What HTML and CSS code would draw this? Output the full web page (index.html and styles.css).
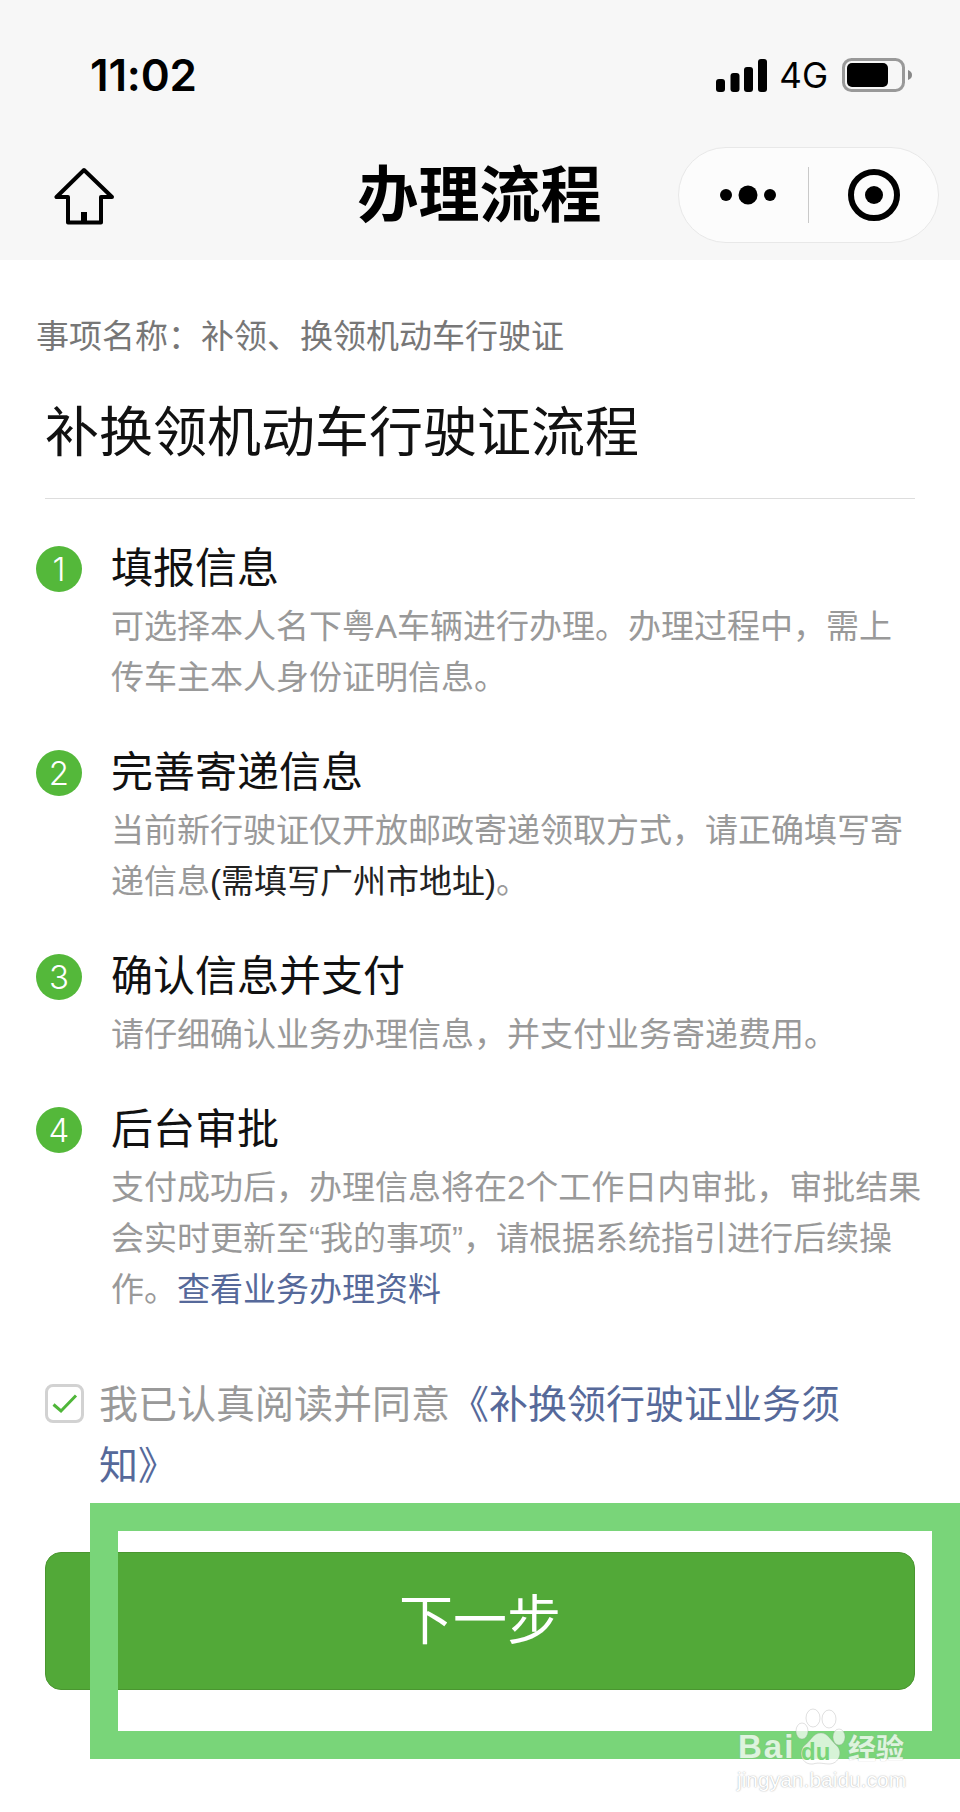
FILE: index.html
```html
<!DOCTYPE html>
<html lang="zh-CN">
<head>
<meta charset="utf-8">
<title>办理流程</title>
<link rel="stylesheet" href="styles.css">
</head>
<body>
<div class="page">
  <header class="top">
    <div class="status">
      <span class="time">11:02</span>
      <div class="status-right">
        <svg class="signal" width="51" height="33" viewBox="0 0 51 33"><rect x="0" y="20" width="9" height="13" rx="3"/><rect x="14.500" y="14" width="9" height="19" rx="3"/><rect x="28" y="8" width="9" height="25" rx="3"/><rect x="42" y="0" width="9" height="33" rx="3"/></svg>
        <span class="net">4G</span>
        <svg class="battery" width="70" height="34" viewBox="0 0 70 34"><rect x="1.500" y="1.500" width="60" height="31" rx="8" fill="none" stroke="#999" stroke-width="3"/><rect x="5" y="5" width="41" height="24" rx="5" fill="#000"/><path d="M66 12c3 1 4 3 4 5s-1 4-4 5z" fill="#888"/></svg>
      </div>
    </div>
    <nav class="navbar">
      <svg class="home" width="62" height="60" viewBox="0 0 62 60"><path d="M30 3 2.500 30H14v25.500h33V30h11z" fill="none" stroke="#000" stroke-width="4" stroke-linejoin="round"/><rect x="27" y="45" width="6" height="10" fill="#000"/></svg>
      <h1 class="nav-title">办理流程</h1>
      <div class="capsule">
        <svg width="62" height="20" viewBox="0 0 62 20"><circle cx="6" cy="10" r="6"/><circle cx="28" cy="10" r="9.500"/><circle cx="50" cy="10" r="6"/></svg>
        <span class="capsule-line"></span>
        <svg width="52" height="52" viewBox="0 0 52 52"><circle cx="26" cy="26" r="23" fill="none" stroke="#000" stroke-width="6"/><circle cx="26" cy="26" r="9"/></svg>
      </div>
    </nav>
  </header>

  <main class="content">
    <p class="item-name">事项名称：补领、换领机动车行驶证</p>
    <h2 class="flow-title">补换领机动车行驶证流程</h2>
    <div class="rule"></div>

    <ol class="steps">
      <li class="step">
        <span class="num">1</span>
        <div class="step-body">
          <h3 class="step-title">填报信息</h3>
          <p class="step-desc">可选择本人名下粤A车辆进行办理。办理过程中，需上<br>传车主本人身份证明信息。</p>
        </div>
      </li>
      <li class="step">
        <span class="num">2</span>
        <div class="step-body">
          <h3 class="step-title">完善寄递信息</h3>
          <p class="step-desc">当前新行驶证仅开放邮政寄递领取方式，请正确填写寄<br>递信息<span class="dark">(需填写广州市地址)</span>。</p>
        </div>
      </li>
      <li class="step">
        <span class="num">3</span>
        <div class="step-body">
          <h3 class="step-title">确认信息并支付</h3>
          <p class="step-desc">请仔细确认业务办理信息，并支付业务寄递费用。</p>
        </div>
      </li>
      <li class="step">
        <span class="num">4</span>
        <div class="step-body">
          <h3 class="step-title">后台审批</h3>
          <p class="step-desc">支付成功后，办理信息将在2个工作日内审批，审批结果<br>会实时更新至“我的事项”，请根据系统指引进行后续操<br>作。<a class="link">查看业务办理资料</a></p>
        </div>
      </li>
    </ol>

    <div class="agree">
      <span class="checkbox"><svg width="26" height="20" viewBox="0 0 26 20"><path d="M1.500 10.500 9 17 24 1.500" fill="none" stroke="#4fb639" stroke-width="3"/></svg></span>
      <p class="agree-text">我已认真阅读并同意<a class="link">《补换领行驶证业务须<br>知》</a></p>
    </div>

    <button class="next" type="button">下一步</button>
  </main>

  <div class="highlight"></div>

  <div class="watermark">
    <svg class="paw" width="54" height="60" viewBox="0 0 54 60"><g fill="#fff" fill-opacity=".7" stroke="#999" stroke-opacity=".3" stroke-width="1"><ellipse cx="18" cy="10" rx="7" ry="9"/><ellipse cx="34" cy="11" rx="7" ry="9"/><ellipse cx="7" cy="23" rx="6" ry="8"/><ellipse cx="44" cy="29" rx="6" ry="8"/><path d="M26 25c7 0 10 8 16 13 6 6 2 18-8 18-5 0-10-2-16 0-11 1-15-11-9-18 7-5 9-13 17-13z"/></g></svg>
    <span class="wm-bai">Bai</span>
    <span class="wm-du">du</span>
    <span class="wm-jy">经验</span>
    <span class="wm-url">jingyan.baidu.com</span>
  </div>
</div>
</body>
</html>
```
FILE: styles.css
```css
* { box-sizing: border-box; }
html, body { margin: 0; padding: 0; background: #fff; }
body { font-family: "Liberation Sans", "Noto Sans CJK SC", sans-serif; color: #111; }
h1, h2, h3, p, ol { margin: 0; padding: 0; font-weight: 400; }
ol { list-style: none; }

.page { position: relative; width: 960px; height: 1812px; overflow: hidden; background: #fff; }

.top { height: 260px; background: #f7f7f7; }
.status { display: flex; justify-content: space-between; align-items: center; height: 147px; padding: 3px 48px 0 90px; }
.time { font-family: Inter, "Liberation Sans", sans-serif; font-size: 44px; font-weight: 600; color: #000; letter-spacing: -0.2px; }
.status-right { display: flex; align-items: center; }
.signal { display: block; margin-right: 12px; }
.net { font-family: Inter, "Liberation Sans", sans-serif; font-size: 35px; color: #000; margin-right: 14px; }
.battery { display: block; }

.navbar { display: grid; grid-template-columns: 1fr auto 1fr; align-items: center; height: 96px; padding: 0 21px 0 20px; }
.home { display: block; margin: 4px 0 0 34px; justify-self: start; }
.nav-title { font-family: "Noto Sans CJK SC", sans-serif; font-size: 61px; font-weight: 700; line-height: 88px; height: 96px; color: #000; }
.capsule { justify-self: end; display: flex; align-items: center; width: 261px; height: 96px; padding-left: 41px; border: 1px solid #e8e8e8; border-radius: 48px; background: #fcfcfc; }
.capsule-line { width: 1px; height: 56px; background: #c9c9c9; margin: 0 39px 0 26px; }

.content { padding: 55px 45px 0; }
.item-name { font-size: 33px; line-height: 44px; color: #777; margin-left: -9px; }
.flow-title { font-size: 54px; line-height: 70px; margin-top: 39px; color: #111; }
.rule { height: 1px; background: #ddd; margin-top: 30px; }

.steps { margin-top: 39px; }
.step { display: flex; margin-left: -9px; margin-bottom: 39px; }
.num { flex: none; width: 46px; height: 46px; margin-top: 8px; border-radius: 50%; background: #54b83a; color: #fff; font-family: Inter, "Liberation Sans", sans-serif; font-weight: 300; font-size: 33px; line-height: 46px; text-align: center; }
.step-body { margin-left: 29px; padding-top: 1px; }
.step-title { font-size: 42px; line-height: 60px; color: #111; }
.step-desc { margin-top: 2px; font-size: 33px; line-height: 51px; color: #999; white-space: nowrap; }
.dark { color: #222; }
.link { color: #56699a; }

.agree { display: flex; margin-top: 59px; }
.checkbox { flex: none; display: flex; align-items: center; justify-content: center; width: 39px; height: 39px; margin-top: 10px; border: 3px solid #d2d2d2; border-radius: 8px; }
.agree-text { margin-left: 15px; font-size: 39px; line-height: 61px; color: #999; white-space: nowrap; }

.next { display: block; width: 870px; height: 138px; margin-top: 56px; padding: 0 0 9px; border: 1px solid #4a9630; border-radius: 16px; background: #52a938; color: #fff; font-family: inherit; font-size: 54px; }

.highlight { position: absolute; left: 90px; top: 1503px; width: 870px; height: 256px; border: 28px solid #79d579; }

.watermark { position: absolute; left: 730px; top: 1700px; width: 190px; height: 100px; color: #fff; }
.paw { position: absolute; left: 65px; top: 8px; }
.wm-bai { position: absolute; left: 8px; top: 27px; font-family: "Liberation Sans", sans-serif; font-weight: 700; font-size: 33px; line-height: 40px; letter-spacing: 2px; opacity: .75; text-shadow: 0 0 1px #999; }
.wm-du { position: absolute; left: 71px; top: 38px; font-family: "Liberation Sans", sans-serif; font-weight: 700; font-size: 24px; line-height: 28px; color: #79d579; }
.wm-jy { position: absolute; left: 118px; top: 29px; font-family: "Noto Sans CJK SC", sans-serif; font-size: 28px; font-weight: 700; line-height: 36px; opacity: .75; text-shadow: 0 0 1px #999; }
.wm-url { position: absolute; left: 7px; top: 66px; font-family: "Liberation Sans", sans-serif; font-size: 21px; line-height: 28px; text-shadow: 0 0 1.5px #999; white-space: nowrap; }
```
